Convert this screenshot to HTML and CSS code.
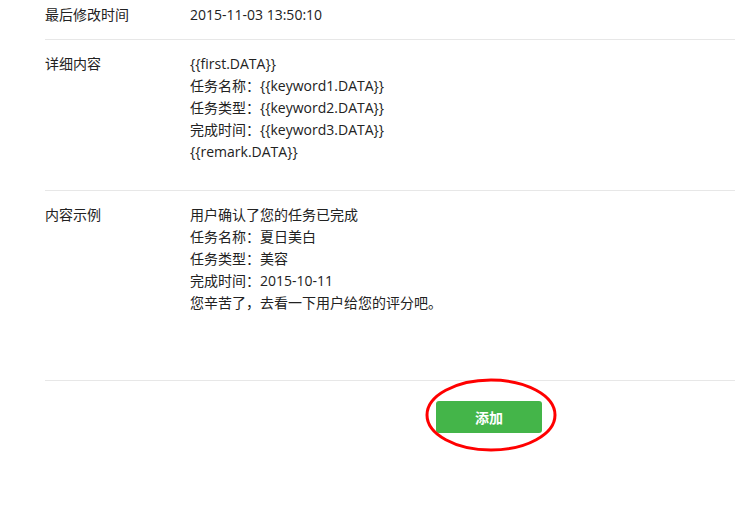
FILE: index.html
```html
<!DOCTYPE html>
<html lang="zh-CN">
<head>
  <meta charset="UTF-8">
  <title>模板详情</title>
  <link rel="stylesheet" href="styles.css">
</head>
<body>
  <div class="detail">
    <div class="row row-first">
      <div class="label">最后修改时间</div>
      <div class="value">2015-11-03 13:50:10</div>
    </div>
    <div class="row row-content">
      <div class="label">详细内容</div>
      <div class="value">
        {{first.DATA}}<br>
        任务名称：{{keyword1.DATA}}<br>
        任务类型：{{keyword2.DATA}}<br>
        完成时间：{{keyword3.DATA}}<br>
        {{remark.DATA}}
      </div>
    </div>
    <div class="row row-example">
      <div class="label">内容示例</div>
      <div class="value">
        用户确认了您的任务已完成<br>
        任务名称：夏日美白<br>
        任务类型：美容<br>
        完成时间：2015-10-11<br>
        您辛苦了，去看一下用户给您的评分吧。
      </div>
    </div>
  </div>

  <div class="actions">
    <span class="btn-wrap">
      <button class="add-button">添加</button>
      <svg class="circle-mark" width="134" height="76" viewBox="0 0 134 76">
        <ellipse cx="67" cy="38" rx="64" ry="35" fill="none" stroke="#f00" stroke-width="3"/>
      </svg>
    </span>
  </div>
</body>
</html>
```

FILE: styles.css
```css
body {
  margin: 0;
  min-height: 507px;
  background: #fff;
  color: #222;
  font-family: "Open Sans", "Noto Sans CJK SC", sans-serif;
  font-size: 14px;
  line-height: 22px;
}
.detail {
  margin-left: 45px;
}
.row {
  display: flex;
  border-bottom: 1px solid #e7e7e7;
}
.label {
  width: 145px;
  flex-shrink: 0;
}
.row-first {
  padding: 4px 0 13px;
}
.row-content {
  padding: 13px 0 27px;
}
.row-example {
  padding: 13px 0 66px;
}
.actions {
  padding: 20px 0 80px 436px;
}
.btn-wrap {
  position: relative;
  display: inline-block;
}
.add-button {
  display: block;
  width: 106px;
  height: 32px;
  background-color: #44b549;
  color: #fff;
  border: none;
  border-radius: 3px;
  font-family: inherit;
  font-size: 14px;
  font-weight: bold;
  cursor: pointer;
}
.circle-mark {
  position: absolute;
  left: -12px;
  top: -24px;
  pointer-events: none;
}
```
